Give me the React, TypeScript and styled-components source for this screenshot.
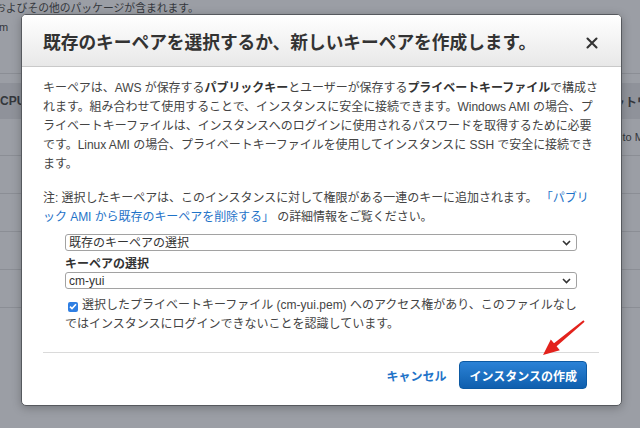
import styled, { createGlobalStyle } from 'styled-components';

const GlobalStyle = createGlobalStyle`
  html, body {
    margin: 0;
    padding: 0;
  }
  body {
    font-family: "Liberation Sans", "Noto Sans CJK JP", sans-serif;
  }
  * {
    box-sizing: border-box;
  }
`;

const Screen = styled.div`
  position: relative;
  width: 640px;
  height: 428px;
  overflow: hidden;
  background: #9b9ea5;
  color: #34373c;
  font-size: 11px;
`;

const PageNote = styled.div<{ $top?: number; $left?: number; $size?: number }>`
  margin-top: ${(p) => p.$top ?? 0}px;
  margin-left: ${(p) => p.$left ?? 0}px;
  font-size: ${(p) => p.$size ?? 11}px;
  line-height: 16px;
  white-space: nowrap;
`;

const Table = styled.div`
  margin-top: 38px;
  border-top: 1px solid #8b8e95;
  padding-top: 9px;
`;

const TableRow = styled.div<{ $head?: boolean; $h: number }>`
  display: grid;
  grid-template-columns: 601px 1fr;
  align-items: center;
  height: ${(p) => p.$h}px;
  background: ${(p) => (p.$head ? '#8f929a' : 'transparent')};
  border-bottom: ${(p) => (p.$head ? 'none' : '1px solid #8b8e95')};
  font-weight: ${(p) => (p.$head ? 'bold' : 'normal')};
  font-size: ${(p) => (p.$head ? 12 : 11)}px;
  white-space: nowrap;
`;

const Cell = styled.div<{ $pad?: number }>`
  padding-left: ${(p) => p.$pad ?? 0}px;
  overflow: hidden;
`;

const Modal = styled.div`
  position: absolute;
  left: 21px;
  top: 14px;
  width: 601px;
  background: #fff;
  border: 1px solid #56595e;
  border-radius: 5px;
  box-shadow: 0 2px 10px rgba(0, 0, 0, 0.25);
  overflow: hidden;
  color: #444;
  font-size: 12px;
`;

const ModalHeader = styled.div`
  display: flex;
  align-items: center;
  justify-content: space-between;
  height: 52px;
  padding: 5px 23px 0 21px;
  background: linear-gradient(#ffffff, #e8e8e8);
  border-bottom: 1px solid #c9c9c9;
`;

const Title = styled.h2`
  margin: 0;
  font-size: 17.7px;
  line-height: 21px;
  font-weight: bold;
  color: #333;
  white-space: nowrap;
`;

const CloseButton = styled.button`
  display: flex;
  padding: 0;
  border: none;
  background: none;
  cursor: pointer;
`;

const ModalBody = styled.div`
  padding: 12px 22px 0 21px;
`;

const Paragraph = styled.p<{ $gap?: number }>`
  margin: ${(p) => p.$gap ?? 0}px 0 0;
  line-height: 19px;
  letter-spacing: -0.05px;
  white-space: nowrap;

  b {
    color: #333;
  }
`;

const Link = styled.a`
  color: #1f73c8;
  text-decoration: none;
`;

const Form = styled.div`
  margin: 7px 22px 0;
  width: 512px;
`;

const SelectWrap = styled.div`
  position: relative;
  height: 17px;
`;

const Select = styled.select`
  appearance: none;
  width: 100%;
  height: 17px;
  border: 1px solid #a2a2a2;
  border-radius: 3px;
  background: #fff;
  font-family: inherit;
  font-size: 12px;
  color: #333;
  padding: 0 20px 0 3px;
  outline: none;
`;

const Chevron = styled.svg`
  position: absolute;
  right: 6px;
  top: 6px;
  pointer-events: none;
`;

const FieldLabel = styled.div`
  margin-top: 5px;
  line-height: 16px;
  font-weight: bold;
  color: #333;
`;

const CheckText = styled.div`
  margin-top: 7px;
  line-height: 19px;
  white-space: nowrap;
`;

const CheckBox = styled.span`
  display: inline-flex;
  align-items: center;
  justify-content: center;
  width: 10px;
  height: 10px;
  margin: 0 4px 0 3px;
  vertical-align: -1px;
  border-radius: 2px;
  background: #2f7fe3;
`;

const Footer = styled.div`
  display: flex;
  justify-content: flex-end;
  align-items: center;
  gap: 13px;
  margin: 18px 22px 0 21px;
  padding: 8px 12px 16px 0;
  border-top: 1px solid #dadada;
`;

const TextButton = styled.button`
  border: none;
  background: none;
  padding: 0;
  font-family: inherit;
  font-size: 12px;
  font-weight: bold;
  color: #1f73c8;
  cursor: pointer;
`;

const PrimaryButton = styled.button`
  height: 28px;
  padding: 0 9px;
  border: 1px solid #0d5aa3;
  border-radius: 4px;
  background: linear-gradient(#2b82d6, #0f5fae);
  font-family: inherit;
  font-size: 12px;
  font-weight: bold;
  color: #fff;
  cursor: pointer;
`;

const Arrow = styled.svg`
  position: absolute;
  left: 533px;
  top: 305px;
`;

const ChevronIcon = () => (
  <Chevron width="9" height="6" viewBox="0 0 9 6">
    <path d="M1 1l3.5 3.5L8 1" fill="none" stroke="#333" strokeWidth="1.6" />
  </Chevron>
);

const App = () => {
  return (
    <>
      <GlobalStyle />
      <Screen>
        <PageNote $left={-5} $size={10.8}>およびその他のパッケージが含まれます。</PageNote>
        <PageNote $top={3} $left={-1}>m</PageNote>
        <Table>
          <TableRow $head $h={36}>
            <Cell>CPU</Cell>
            <Cell>ネットワーク</Cell>
          </TableRow>
          <TableRow $h={37}>
            <Cell />
            <Cell $pad={8}>Auto Mode</Cell>
          </TableRow>
          <TableRow $h={38} />
          <TableRow $h={38} />
          <TableRow $h={38} />
          <TableRow $h={38} />
        </Table>

        <Modal>
          <ModalHeader>
            <Title>既存のキーペアを選択するか、新しいキーペアを作成します。</Title>
            <CloseButton aria-label="閉じる">
              <svg width="12" height="12" viewBox="0 0 12 12">
                <path d="M1.5 1.5l9 9M10.5 1.5l-9 9" stroke="#333" strokeWidth="2.1" strokeLinecap="round" />
              </svg>
            </CloseButton>
          </ModalHeader>
          <ModalBody>
            <Paragraph>
              キーペアは、AWS が保存する<b>パブリックキー</b>とユーザーが保存する<b>プライベートキーファイル</b>で構成さ
              <br />
              れます。組み合わせて使用することで、インスタンスに安全に接続できます。Windows AMI の場合、プ
              <br />
              ライベートキーファイルは、インスタンスへのログインに使用されるパスワードを取得するために必要
              <br />
              です。Linux AMI の場合、プライベートキーファイルを使用してインスタンスに SSH で安全に接続でき
              <br />
              ます。
            </Paragraph>
            <Paragraph $gap={15}>
              注: 選択したキーペアは、このインスタンスに対して権限がある一連のキーに追加されます。{' '}
              <Link href="#">
                「パブリ
                <br />
                ック AMI から既存のキーペアを削除する」
              </Link>{' '}
              の詳細情報をご覧ください。
            </Paragraph>
            <Form>
              <SelectWrap>
                <Select defaultValue="existing">
                  <option value="existing">既存のキーペアの選択</option>
                  <option value="new">新しいキーペアの作成</option>
                </Select>
                <ChevronIcon />
              </SelectWrap>
              <FieldLabel>キーペアの選択</FieldLabel>
              <SelectWrap>
                <Select defaultValue="cm-yui">
                  <option value="cm-yui">cm-yui</option>
                </Select>
                <ChevronIcon />
              </SelectWrap>
              <CheckText>
                <CheckBox>
                  <svg width="8" height="7" viewBox="0 0 8 7">
                    <path d="M1 3.6l2 2L7 1.2" fill="none" stroke="#fff" strokeWidth="1.6" />
                  </svg>
                </CheckBox>
                選択したプライベートキーファイル (cm-yui.pem) へのアクセス権があり、このファイルなし
                <br />
                ではインスタンスにログインできないことを認識しています。
              </CheckText>
            </Form>
          </ModalBody>
          <Footer>
            <TextButton>キャンセル</TextButton>
            <PrimaryButton>インスタンスの作成</PrimaryButton>
          </Footer>
        </Modal>

        <Arrow width="60" height="60" viewBox="0 0 60 60">
          <polygon
            points="10,50 26.8,45.2 23.6,41.3 51.6,16.7 50.4,15.3 21,38.3 17.8,34.4"
            fill="#e3221c"
          />
        </Arrow>
      </Screen>
    </>
  );
};

export default App;
